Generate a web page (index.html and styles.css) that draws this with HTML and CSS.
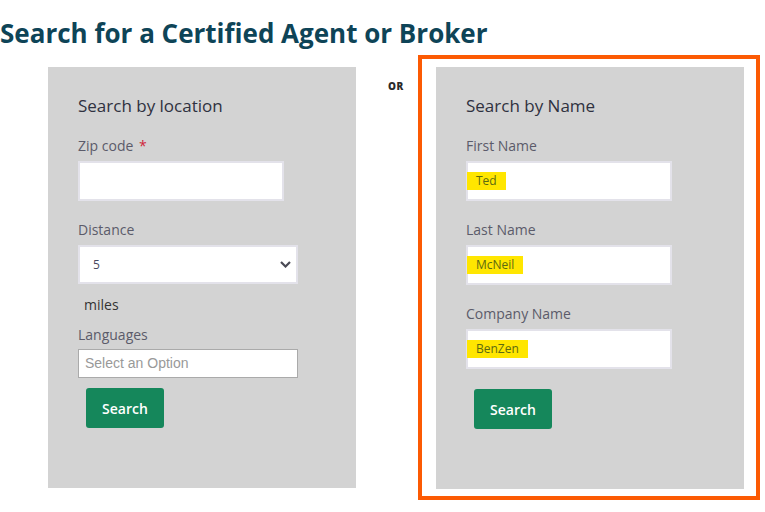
FILE: index.html
```html
<!DOCTYPE html>
<html lang="en">
<head>
<meta charset="utf-8">
<title>Search for a Certified Agent or Broker</title>
<link rel="stylesheet" href="styles.css">
</head>
<body>
<h1 class="title">Search for a Certified Agent or Broker</h1>
<div class="row">
  <section class="panel">
    <h2 class="panel-title">Search by location</h2>
    <label class="label first">Zip code <span class="req">*</span></label>
    <div class="input"></div>
    <label class="label">Distance</label>
    <div class="select">
      <span>5</span>
      <svg class="chev" width="11" height="7" viewBox="0 0 11 7"><path d="M1 1l4.5 4.5L10 1" fill="none" stroke="#4a4a55" stroke-width="2.2"/></svg>
    </div>
    <div class="miles">miles</div>
    <label class="label lang">Languages</label>
    <div class="multi">Select an Option</div>
    <button class="btn">Search</button>
  </section>
  <div class="or">OR</div>
  <div class="box">
    <section class="panel">
      <h2 class="panel-title">Search by Name</h2>
      <label class="label first">First Name</label>
      <div class="input"><span class="hl">Ted</span></div>
      <label class="label">Last Name</label>
      <div class="input"><span class="hl">McNeil</span></div>
      <label class="label">Company Name</label>
      <div class="input"><span class="hl">BenZen</span></div>
      <button class="btn btn2">Search</button>
    </section>
  </div>
</div>
</body>
</html>
```
FILE: styles.css
```css
html, body {
  margin: 0;
  padding: 0;
  background: #fff;
}
body {
  font-family: "Open Sans", "Noto Sans", sans-serif;
  width: 765px;
  height: 512px;
  overflow: hidden;
}
.title {
  margin: 0;
  padding-top: 17px;
  height: 38px;
  box-sizing: border-box;
  font-size: 26px;
  line-height: 32px;
  font-weight: 700;
  color: #0e4457;
  white-space: nowrap;
}
.row {
  display: flex;
  align-items: flex-start;
  padding-left: 48px;
  margin-top: 17px;
}
.panel {
  width: 308px;
  height: 421px;
  box-sizing: border-box;
  background: #d3d3d3;
  padding: 27px 0 0 30px;
  display: flex;
  flex-direction: column;
  align-items: flex-start;
  margin-top: 12px;
}
.box .panel {
  margin-top: 0;
  height: 422px;
}
.panel-title {
  margin: 0;
  font-size: 17px;
  line-height: 24px;
  font-weight: 400;
  color: #2f3140;
}
.label {
  display: block;
  font-size: 14px;
  line-height: 18px;
  color: #5b5b6a;
  margin-top: 20px;
  margin-bottom: 6px;
}
.label.first {
  margin-top: 19px;
}
.req {
  color: #d0263a;
  margin-left: 2px;
}
.input {
  width: 206px;
  height: 40px;
  box-sizing: border-box;
  background: #fff;
  border: 2px solid #e3e2ea;
  display: flex;
  align-items: center;
}
.hl {
  background: #ffe600;
  color: #5c6a12;
  font-size: 12px;
  line-height: 18px;
  padding: 0 9px 0 9px;
  margin-left: -1px;
}
.select {
  width: 220px;
  height: 39px;
  box-sizing: border-box;
  background: #fff;
  border: 2px solid #e3e2ea;
  display: flex;
  align-items: center;
  justify-content: space-between;
  padding: 0 5px 0 13px;
  font-size: 12px;
  color: #4a4a60;
}
.miles {
  font-size: 14px;
  line-height: 18px;
  color: #333;
  margin: 12px 0 0 6px;
}
.label.lang {
  margin-top: 12px;
  margin-bottom: 5px;
}
.multi {
  width: 220px;
  height: 29px;
  box-sizing: border-box;
  background: #fff;
  border: 1px solid #aaa;
  font-family: "Liberation Sans", Arial, sans-serif;
  font-size: 14px;
  color: #999;
  line-height: 27px;
  padding-left: 6px;
}
.btn {
  margin: 10px 0 0 8px;
  width: 78px;
  height: 40px;
  border: 0;
  border-radius: 3px;
  background: #15875b;
  color: #fff;
  font-family: "Open Sans", sans-serif;
  font-size: 14px;
  font-weight: 600;
  padding: 0;
}
.btn2 {
  margin-top: 20px;
}
.or {
  width: 62px;
  box-sizing: border-box;
  padding: 24px 0 0 32px;
  font-size: 10px;
  font-weight: 800;
  color: #2a2a2a;
  letter-spacing: 0.5px;
}
.box {
  width: 342px;
  height: 445px;
  box-sizing: border-box;
  border: 4px solid #fc5a03;
  padding: 8px 0 0 14px;
}
```
